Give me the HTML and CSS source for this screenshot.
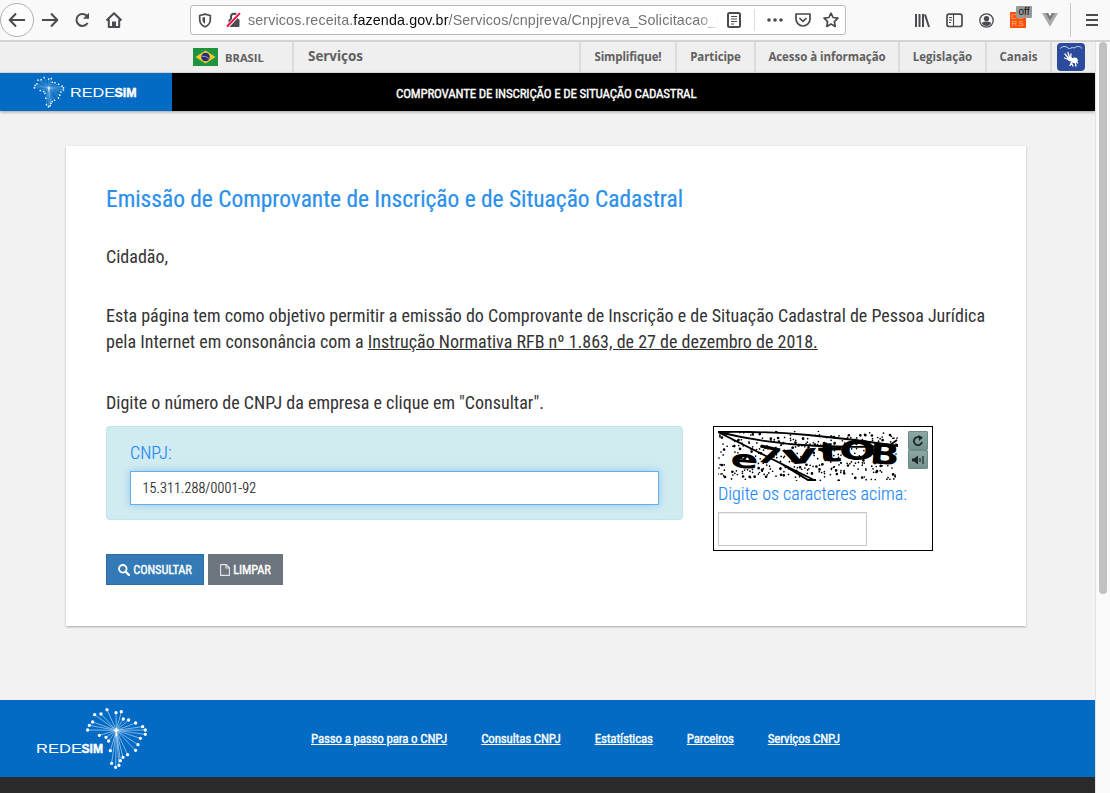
FILE: index.html
```html
<!DOCTYPE html>
<html lang="pt-BR">
<head>
<meta charset="utf-8">
<title>Emissão de Comprovante de Inscrição e de Situação Cadastral</title>
<link rel="stylesheet" href="styles.css">
</head>
<body>
<svg class="defs" width="0" height="0">
  <symbol id="burst" viewBox="255 50 190 190">
    <path class="rays" d="M349 121L284 74M349 121L303 72M349 121L321 59M349 121L348 68M349 121L364 65M349 121L370 87M349 121L386 90M349 121L407 99M349 121L428 110M349 121L436 120M349 121L436 133M349 121L421 145M349 121L414 164M349 121L407 181M349 121L383 194M349 121L369 202M349 121L361 212M349 121L357 226M349 121L347 232M349 121L335 220M349 121L331 182M349 121L326 153M349 121L318 142M349 121L298 136M349 121L263 120M349 121L268 106M349 121L278 96"/>
    <path class="tips" d="M284 74h0M303 72h0M321 59h0M348 68h0M364 65h0M370 87h0M386 90h0M407 99h0M428 110h0M436 120h0M436 133h0M421 145h0M414 164h0M407 181h0M383 194h0M369 202h0M361 212h0M357 226h0M347 232h0M335 220h0M331 182h0M326 153h0M318 142h0M298 136h0M263 120h0M268 106h0M278 96h0"/>
    <path d="M349 113v26M342 121h14" stroke="#fff" stroke-width="4"/>
  </symbol>
</svg>

<header class="toolbar">
  <nav class="nav-buttons">
    <span class="back"><svg width="18" height="16" viewBox="0 0 18 16"><path class="ln" d="M17 8H2M8 1.5L1.7 8 8 14.5"/></svg></span>
    <svg width="18" height="16" viewBox="0 0 18 16"><path class="ln" d="M1 8h15M10 1.5L16.3 8 10 14.5"/></svg>
    <svg width="16" height="16" viewBox="0 0 16 16"><path class="ln" d="M13.2 4.2A6 6 0 1 0 13.6 11"/><path d="M15 .8v6H9z" fill="#4a4a4f"/></svg>
    <svg width="18" height="16" viewBox="0 0 18 16"><path class="ln" d="M1.5 8.5L9 1.3l7.500 7.200M3.800 7.500V15h10.400V7.500"/><path d="M7 15V9.500h4V15z" fill="#4a4a4f"/></svg>
  </nav>
  <div class="address">
    <svg class="shield" width="14" height="15" viewBox="0 0 14 15"><path class="ln thin" d="M7 1.200L12.300 2.500v4c0 3.500-2 6-5.300 7.300C3.700 12.500 1.700 10 1.700 6.500v-4z"/><path d="M7 4v6.800C5.300 9.800 4.500 8.500 4.500 6.500V4.600z" fill="#4a4a4f"/></svg>
    <svg class="lock" width="16" height="16" viewBox="0 0 16 16"><rect x="2.500" y="7" width="11" height="8" rx="1" fill="#4a4a4f"/><path class="ln" d="M5 7V4.800a3 3 0 0 1 6 0V7"/><path d="M1 15L14 1" stroke="#f9f9fa" stroke-width="3.600"/><path d="M1 14.500L14 1.200" stroke="#ff0039" stroke-width="1.800"/></svg>
    <div class="url">servicos.receita.<b>fazenda.gov.br</b>/Servicos/cnpjreva/Cnpjreva_Solicitacao_CS</div>
    <svg class="reader" width="14" height="16" viewBox="0 0 14 16"><rect class="ln" x="1" y="1" width="12" height="14" rx="1.500"/><path class="ln fine" d="M4 4.500h6M4 7h6M4 9.500h6M4 12h3"/></svg>
    <i class="address-sep"></i>
    <svg class="dots" width="16" height="4" viewBox="0 0 16 4"><g fill="#4a4a4f"><circle cx="2" cy="2" r="1.800"/><circle cx="8" cy="2" r="1.800"/><circle cx="14" cy="2" r="1.800"/></g></svg>
    <svg class="pocket" width="16" height="14" viewBox="0 0 16 14"><path class="ln thin" d="M1 1h14v5a7 7 0 0 1-14 0z"/><path class="ln thin" d="M4.500 5L8 8.300 11.500 5"/></svg>
    <svg class="star" width="16" height="16" viewBox="0 0 16 16"><path class="ln thin" d="M8 1.200l2.100 4.300 4.800.7-3.500 3.400.8 4.800L8 12.100l-4.200 2.300.8-4.800L1.100 6.200l4.800-.7z"/></svg>
  </div>
  <div class="tools">
    <svg width="16" height="15" viewBox="0 0 16 15"><path class="ln" d="M2 1v13M5.500 1v13M9 1v13M11 1.500L15 14"/></svg>
    <svg width="17" height="15" viewBox="0 0 17 15"><rect class="ln thin" x="1" y="1.200" width="15" height="12.300" rx="2"/><path class="ln fine" d="M7.500 1.500v12M3 4.500h3M3 7h3M3 9.500h2"/></svg>
    <svg width="15" height="15" viewBox="0 0 15 15"><circle cx="7.500" cy="7.500" r="6.700" fill="none" stroke="#4a4a4f" stroke-width="1.300"/><circle cx="7.500" cy="5.600" r="2.700" fill="#4a4a4f"/><path d="M2.800 10c2-2 7.400-2 9.400 0-1.500 4-7.900 4-9.400 0z" fill="#4a4a4f"/></svg>
    <span class="cors"><span>CO</span><span>RS</span><em>off</em></span>
    <svg width="16" height="14" viewBox="0 0 16 14"><path d="M0 0h3.200L8 8.300 12.800 0H16L8 13.800z" fill="#aaa"/><path d="M3.200 0h3L8 3.200 9.800 0h3L8 8.300z" fill="#7b7b7b"/></svg>
    <i class="tools-sep"></i>
    <svg width="12" height="12" viewBox="0 0 12 12"><path class="ln" d="M0 1h12M0 6h12M0 11h12"/></svg>
  </div>
</header>

<div class="viewport">
<div class="page">
  <div class="gov">
    <div class="brasil">
      <svg width="25" height="18" viewBox="0 0 25 18"><path fill="#1f9440" d="M0 0h25v18H0z"/><path fill="#fbc929" d="M12.500 2.500L22.500 9l-10 6.500L2.500 9z"/><circle cx="12.500" cy="9" r="4.300" fill="#252c78"/><path d="M8.500 8.200q4.500-.8 7.800 2.600" fill="none" stroke="#ccd" stroke-width=".7"/></svg>
      BRASIL
    </div>
    <div class="servicos">Serviços</div>
    <div class="g1">Simplifique!</div>
    <div class="g2">Participe</div>
    <div class="g3">Acesso à informação</div>
    <div class="g4">Legislação</div>
    <div class="g5">Canais</div>
    <div class="libras"><svg width="28" height="28" viewBox="0 0 28 28"><rect width="28" height="28" rx="4" fill="#2c4b9c"/><path d="M3 5.500q4-4 8-.5 2 1.500 3 0 1-1 3 0 5-3.500 8 .5" fill="none" stroke="#c4cfee" stroke-width="1"/><path d="M8 11l4 5M11 9.500l1.500 5M7.500 15l5 2M14 11l-.5 5M16 23l-2-4M19 23l-1-4M13 22.500l2-4M20.500 20l-2-3" stroke="#fff" stroke-width="1.300" stroke-linecap="round"/><circle cx="13" cy="16" r="2.300" fill="#fff"/><ellipse cx="17.500" cy="17.300" rx="3.300" ry="2.800" fill="#fff"/></svg></div>
  </div>

  <div class="titlebar">
    <div class="brand">
      <svg class="logo-burst" width="32" height="32"><use href="#burst"/></svg>
      <svg width="66" height="12" viewBox="0 0 66 12"><text class="wm" x="-1" y="10.500" textLength="45" lengthAdjust="spacingAndGlyphs">REDE</text><text class="wm heavy" x="43.500" y="10.500" textLength="22" lengthAdjust="spacingAndGlyphs">SiM</text></svg>
    </div>
    <div class="title">COMPROVANTE DE INSCRIÇÃO E DE SITUAÇÃO CADASTRAL</div>
  </div>

  <main class="card">
    <h1>Emissão de Comprovante de Inscrição e de Situação Cadastral</h1>
    <p class="hello">Cidadão,</p>
    <p class="about">Esta página tem como objetivo permitir a emissão do Comprovante de Inscrição e de Situação Cadastral de Pessoa Jurídica pela Internet em consonância com a <a>Instrução Normativa RFB nº 1.863, de 27 de dezembro de 2018.</a></p>
    <p class="prompt">Digite o número de CNPJ da empresa e clique em "Consultar".</p>
    <div class="form">
      <div class="panel">
        <label>CNPJ:</label>
        <div class="input">15.311.288/0001-92</div>
      </div>
      <div class="captcha">
        <div class="challenge">
          <svg width="180" height="50" viewBox="0 0 180 50">
            <g class="noise" id="noise">
              <path stroke-dasharray="0 7.300 0 13 0 4 0 19.600 0 9 0 3 0 22" d="M2 6q20-9 40 0t40 2 40-3 58 2"/>
              <path stroke-dasharray="0 11 0 5.200 0 3 0 8 0 17.300" d="M5 13q15-9 30 0t30 0 30-4 30 4 50-4"/>
              <path stroke-dasharray="0 13.100 0 6 0 4.600 0 10 0 7" d="M3 21q18-13 36 0t36-3 36 5 36-5 33 4"/>
              <path stroke-dasharray="0 5 0 12.500 0 3 0 9.200 0 14" d="M1 27q14-12 28 0t28-2 28 3 28-4 28 5 38-4"/>
              <path class="big" stroke-dasharray="0 14.200 0 9 0 17.300 0 4 0 19" d="M4 34q16-13 32 0t32 0 32 3 32-5 47 4"/>
              <path stroke-dasharray="0 6 0 10.700 0 4 0 13.300 0 3" d="M1 37q13-10 26 0t26 4 26-5 26 6 26-6 26 4 23 3"/>
              <path class="big" stroke-dasharray="0 9 0 24.300 0 12 0 6.400 0 15" d="M7 46q15-14 30 0t30-3 30 3 30-5 50 4"/>
              <path stroke-dasharray="0 3 0 8.600 0 14 0 5.500 0 10" d="M3 43q18 12 36 0t36 4 36-6 36 6 31-4"/>
              <path class="big" stroke-dasharray="0 16.200 0 7 0 20.700 0 15" d="M20 10q20-14 40 0t40 2 70-6"/>
            </g>
            <use href="#noise" transform="translate(179 50) scale(-1 -1)"/>
            <g class="scratch"><path d="M0 1L98 50M0 1q45-1 90 3t90 11M0 1q50 12 100 14t80-1M62 32l28 17h8M172 14l7-5"/></g>
            <g class="glyphs">
              <text transform="translate(12 36) rotate(4) scale(1.650 1)" font-size="25">e</text>
              <text transform="translate(37 30) rotate(12) scale(1.500 1)" font-size="24">7</text>
              <text transform="translate(64 34) rotate(-4) scale(2.050 1)" font-size="27">v</text>
              <text transform="translate(100 31) rotate(-2) scale(2 1)" font-size="26">t</text>
              <text transform="translate(121 29) scale(1.680 1)" font-size="26">O</text>
              <text transform="translate(151 32) rotate(5) scale(1.350 1)" font-size="29">B</text>
            </g>
          </svg>
          <div class="captcha-buttons">
            <span><svg width="12" height="12" viewBox="0 0 12 12"><path d="M8.500 2.800A4.100 4.100 0 1 0 10 7" fill="none" stroke="#1c2828" stroke-width="1.800"/><path d="M6.500 0l4.500 2.500L7 6z" fill="#1c2828"/></svg></span>
            <span><svg width="12" height="10" viewBox="0 0 12 10"><path d="M0 3.500h2L6 .5v9l-4-3H0z" fill="#1c2828"/><path d="M8 3v4M11 1v8" stroke="#1c2828" stroke-width="1.200"/></svg></span>
          </div>
        </div>
        <label>Digite os caracteres acima:</label>
        <div class="answer"></div>
      </div>
    </div>
    <div class="actions">
      <span class="btn primary"><svg width="12" height="12" viewBox="0 0 12 12"><circle cx="4.800" cy="4.800" r="3.800" fill="none" stroke="#fff" stroke-width="1.800"/><path d="M7.700 7.700l3.200 3.200" stroke="#fff" stroke-width="2.200" stroke-linecap="round"/></svg>CONSULTAR</span>
      <span class="btn secondary"><svg width="10" height="12" viewBox="0 0 10 12"><path d="M.6.6h5.600l3.200 3.200v7.600H.6zM6 .6V4h3.400" fill="none" stroke="#e4e6e8" stroke-width="1.100"/></svg>LIMPAR</span>
    </div>
  </main>

  <footer class="footer">
    <svg class="footer-logo" width="115" height="67" viewBox="0 0 115 67">
      <text class="wm" x="1" y="47.500" textLength="46" lengthAdjust="spacingAndGlyphs">REDE</text><text class="wm heavy" x="46.500" y="47.500" textLength="21.500" lengthAdjust="spacingAndGlyphs">SiM</text>
      <use href="#burst" x="50" y="1.700" width="63.300" height="63.300"/>
    </svg>
    <nav class="links"><a>Passo a passo para o CNPJ</a><a>Consultas CNPJ</a><a>Estatísticas</a><a>Parceiros</a><a>Serviços CNPJ</a></nav>
  </footer>
  <div class="base"></div>
</div>
<aside class="scroll"><div class="thumb"></div></aside>
</div>
</body>
</html>
```
FILE: styles.css
```css
* { box-sizing: border-box; }
body { margin: 0; height: 793px; overflow: hidden; display: flex; flex-direction: column; font-family: "Roboto Condensed", Roboto, sans-serif; color: #333; background: #f2f2f2; }
svg { display: block; flex: none; }
.defs { position: absolute; }
.ln { fill: none; stroke: #4a4a4f; stroke-width: 2; stroke-linejoin: round; }
.thin { stroke-width: 1.7; }
.fine { stroke-width: 1.1; }

.toolbar { height: 42px; flex: none; display: flex; align-items: flex-start; background: #f9f9fa; border-bottom: 2px solid #d3d3d5; }
.nav-buttons { width: 190px; flex: none; height: 40px; display: flex; align-items: center; }
.nav-buttons > svg { margin-right: 15px; }
.back { width: 34px; height: 34px; margin-right: 7px; border: 1px solid #b0b0b3; border-radius: 50%; background: #fdfdfd; display: flex; align-items: center; justify-content: center; }
.address { width: 656px; flex: none; height: 30px; margin-top: 5px; padding-left: 7px; border: 1px solid #b8b8bb; border-radius: 3px; background: #fff; display: flex; align-items: center; }
.lock { margin-left: 14px; }
.url { width: 470px; flex: none; margin: 0 0 0 6px; font: 14.3px/18px "Liberation Sans", Arial, sans-serif; color: #737373; white-space: nowrap; overflow: hidden; letter-spacing: .12px; -webkit-mask-image: linear-gradient(90deg, #000 450px, transparent 472px); }
.url b { font-weight: 400; color: #0c0c0d; }
.reader { margin-left: 9px; }
.address-sep { width: 1px; height: 22px; margin: 0 12px 0 13px; background: #dcdcde; }
.pocket { margin-left: 12px; }
.star { margin-left: 12px; }
.tools { flex: 1; height: 40px; padding-left: 68px; display: flex; align-items: center; }
.tools > svg { margin-right: 16px; }
.cors { position: relative; width: 16px; height: 16px; margin: 0 16px 0 0; padding-top: 1px; background: #ff5208; color: #ffb48c; font: 8px/7px "Liberation Sans", sans-serif; }
.cors span { display: block; text-align: center; letter-spacing: 1px; }
.cors em { position: absolute; left: 6px; top: -6px; width: 16px; height: 12px; border-radius: 1px; background: #999; color: #111; font: 10px/12px "Liberation Sans", sans-serif; text-align: center; }
.tools-sep { width: 1px; height: 34px; margin: 0 15px 0 -4px; background: #c8c8ca; }

.viewport { flex: 1; display: flex; min-height: 0; }
.page { width: 1095px; display: flex; flex-direction: column; }
.scroll { width: 15px; border-left: 1px solid #e4e4e4; background: #fafafa; display: flex; justify-content: center; }
.thumb { width: 8px; height: 552px; border-radius: 4px; background: #c1c1c1; }

.gov { height: 31px; flex: none; display: flex; background: #efefef; font: bold 11.5px/29px "Open Sans", "Noto Sans", sans-serif; color: #606060; border-bottom: 1px solid #e2e2e2; text-align: center; }
.gov > div + div { border-left: 2px solid #dcdcdc; }
.brasil { width: 292px; padding-left: 193px; display: flex; align-items: center; gap: 7px; font-size: 11.2px; }
.gov .servicos { width: 287px; padding-left: 14px; text-align: left; font-size: 13.4px; }
.g1 { width: 96px; letter-spacing: -.1px; }
.g2 { width: 79px; letter-spacing: -.1px; }
.g3 { width: 144px; letter-spacing: -.05px; }
.g4 { width: 87px; }
.g5 { width: 65px; }
.libras { padding: 1px 0 0 5px; }

.titlebar { height: 38px; flex: none; display: flex; background: #000; box-shadow: 0 1px 3px rgba(0,0,0,.35); }
.brand { width: 172px; padding-left: 33px; display: flex; align-items: center; gap: 6px; background: #036bc4; }
.title { padding-left: 224px; color: #fff; font-size: 13px; font-weight: 400; letter-spacing: -.2px; -webkit-text-stroke: .35px; line-height: 41px; }
.rays { fill: none; stroke: #a9cff0; stroke-width: 2.6; opacity: .85; }
.tips { fill: none; stroke: #fff; stroke-width: 10; stroke-linecap: round; }
.wm { font: 13px "Liberation Sans", Arial, sans-serif; fill: #fff; }
.heavy { font-weight: 700; stroke: #fff; stroke-width: .5; }

.card { width: 960px; height: 480px; flex: none; margin: 35px 0 0 66px; padding: 0 40px; background: #fff; box-shadow: 0 1px 2px rgba(0,0,0,.3); }
h1 { margin: 37px 0 0; font-size: 23.4px; font-weight: 400; line-height: 32px; color: #2b90ec; -webkit-text-stroke: .2px; }
p { margin: 0; font-size: 18px; line-height: 26px; }
.hello { margin-top: 29px; }
.about { margin-top: 33px; }
.about a { text-decoration: underline; }
.prompt { margin-top: 35px; }
.form { margin-top: 10px; display: flex; align-items: flex-start; gap: 30px; }
.panel { width: 577px; height: 94px; padding: 13px 23px; border: 1px solid #bee5eb; border-radius: 4px; background: #d1ecf1; }
label { display: block; font-size: 18px; line-height: 26px; font-weight: 300; color: #1e88f7; -webkit-text-stroke: .15px; }
.input { width: 529px; height: 34px; margin-top: 5px; padding-left: 11.500px; border: 1px solid #66afe9; background: #fff; box-shadow: 0 0 8px rgba(102,175,233,.6); font-size: 14px; line-height: 32px; font-weight: 300; color: #222; -webkit-text-stroke: .2px; letter-spacing: .17px; }
.captcha { width: 220px; height: 125px; padding: 4px; border: 1px solid #000; }
.challenge { display: flex; gap: 10px; height: 50px; }
.captcha label { line-height: 25px; }
.noise path { fill: none; stroke: #000; stroke-width: 1.7; stroke-linecap: round; }
.noise .big { stroke-width: 2.7; }
.scratch path { fill: none; stroke: #000; stroke-width: 1.8; }
.glyphs { font-family: "DejaVu Sans", sans-serif; font-weight: 700; }
.captcha-buttons { display: flex; flex-direction: column; }
.captcha-buttons span { width: 20px; height: 19px; border: 1px solid #6e8986; border-radius: 1px; background: linear-gradient(#8ba8a4, #74918d); display: flex; align-items: center; justify-content: center; }
.answer { width: 149px; height: 34px; margin-top: 6px; border: 1px solid #c9c9c9; box-shadow: inset 0 1px 1px rgba(0,0,0,.08); }
.actions { margin-top: 3px; display: flex; gap: 4px; }
.btn { height: 31px; display: flex; align-items: center; justify-content: center; gap: 3px; border: 1px solid #2e6da4; background: #337ab7; color: #fff; font-size: 12.4px; font-weight: 400; letter-spacing: -.1px; -webkit-text-stroke: .35px; }
.primary { width: 98px; }
.secondary { width: 75px; border-color: #6c757d; background: #6c757d; }

.footer { height: 77px; flex: none; margin-top: 74px; display: flex; align-items: center; padding-left: 35px; background: #036bc4; }
.links { display: flex; gap: 34px; margin-left: 161px; font-size: 13px; font-weight: 400; letter-spacing: -.18px; -webkit-text-stroke: .35px; color: #fff; }
.links a { text-decoration: underline; white-space: nowrap; }
.base { flex: 1; background: #2a2a2a; }
```
